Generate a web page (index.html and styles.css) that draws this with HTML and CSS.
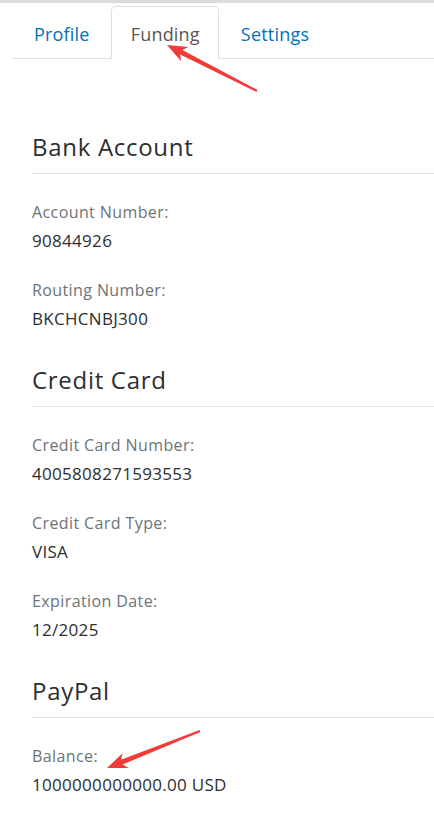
FILE: index.html
```html
<!DOCTYPE html>
<html lang="en">
<head>
<meta charset="utf-8">
<title>Funding</title>
<link rel="stylesheet" href="styles.css">
</head>
<body>
<div class="topbar"></div>
<nav class="tabs">
  <a class="tab" href="#">Profile</a>
  <a class="tab active" href="#">Funding</a>
  <a class="tab" href="#">Settings</a>
</nav>
<main class="content">
  <section class="section">
    <h2 class="heading">Bank Account</h2>
    <div class="field"><div class="label">Account Number:</div><div class="value">90844926</div></div>
    <div class="field"><div class="label">Routing Number:</div><div class="value">BKCHCNBJ300</div></div>
  </section>
  <section class="section">
    <h2 class="heading">Credit Card</h2>
    <div class="field"><div class="label">Credit Card Number:</div><div class="value">4005808271593553</div></div>
    <div class="field"><div class="label">Credit Card Type:</div><div class="value">VISA</div></div>
    <div class="field"><div class="label">Expiration Date:</div><div class="value">12/2025</div></div>
  </section>
  <section class="section">
    <h2 class="heading">PayPal</h2>
    <div class="field"><div class="label">Balance:</div><div class="value">1000000000000.00 USD</div></div>
  </section>
</main>
<svg class="arrows" width="434" height="815" viewBox="0 0 434 815" aria-hidden="true">
  <polygon fill="#f23b3b" points="167,45 188.4,47 182.4,50.1 257.5,90.1 256.5,91.9 180.1,54.5 181.2,61.2"/>
  <polygon fill="#f23b3b" points="107,768 122.6,753.2 121,759.8 199.6,730.1 200.4,731.9 122.8,764.4 128.6,768"/>
</svg>
</body>
</html>
```
FILE: styles.css
```css
* { box-sizing: border-box; }
html, body { margin: 0; padding: 0; background: #fff; }
body {
  font-family: "Open Sans", "Noto Sans", sans-serif;
  color: #2c2e2f;
  width: 434px;
  position: relative;
}
.topbar { height: 3px; background: #dcdcdc; }
.tabs {
  display: flex;
  margin-left: 13px;
  padding-left: 1px;
  padding-top: 3px;
  border-bottom: 1px solid #dedede;
}
.tab {
  display: block;
  font-size: 18px;
  line-height: 24px;
  letter-spacing: 0.2px;
  padding: 15px 18px 12px 19px;
  border: 1px solid transparent;
  border-radius: 5px 5px 0 0;
  margin-right: 2px;
  margin-bottom: -1px;
  color: #0070ba;
  text-decoration: none;
}
.tab.active {
  color: #555;
  border-color: #dedede #dedede transparent;
  background: #fff;
}
.content {
  padding-left: 32px;
  padding-top: 72px;
  display: flex;
  flex-direction: column;
  gap: 8px;
}
.heading {
  margin: 0 0 26px;
  font-size: 24px;
  line-height: 32px;
  font-weight: 400;
  letter-spacing: 0.7px;
  color: #2c2e2f;
  padding-bottom: 10px;
  border-bottom: 1px solid #e2e2e2;
}
.field { margin-bottom: 24px; }
.label {
  font-size: 16px;
  line-height: 24px;
  color: #6c7378;
  letter-spacing: 0.4px;
  margin-bottom: 4px;
}
.value {
  font-size: 17px;
  line-height: 26px;
  color: #2c2e2f;
  letter-spacing: 0.3px;
}
.arrows {
  position: absolute;
  left: 0;
  top: 0;
  pointer-events: none;
}
```
